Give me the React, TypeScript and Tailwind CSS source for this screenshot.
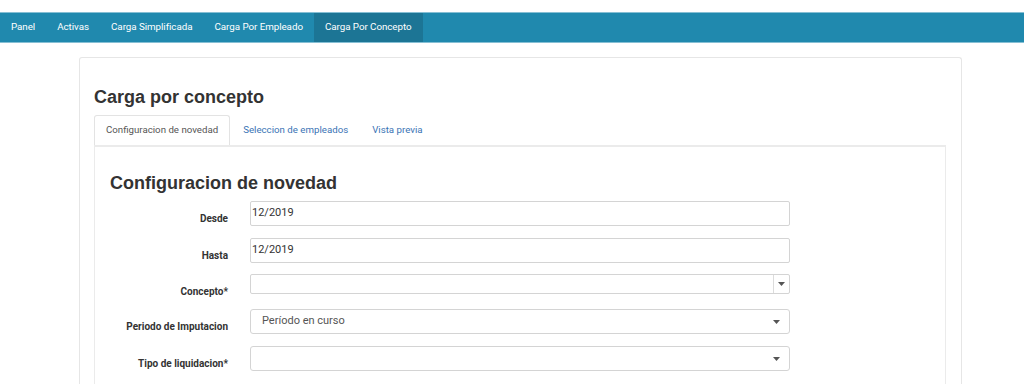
import React from "react";

const navItems = [
  { label: "Panel", active: false },
  { label: "Activas", active: false },
  { label: "Carga Simplificada", active: false },
  { label: "Carga Por Empleado", active: false },
  { label: "Carga Por Concepto", active: true },
];

function Caret() {
  return (
    <svg width="7" height="4" viewBox="0 0 7 4" aria-hidden="true">
      <path d="M0 0h7L3.5 4z" fill="#555" />
    </svg>
  );
}

function Row({
  label,
  height,
  children,
}: {
  label: string;
  height: string;
  children: React.ReactNode;
}) {
  return (
    <div className={`flex gap-[22px] ${height}`}>
      <div className="w-[118px] pt-[10px] text-right text-[10px] font-bold text-[#333]">
        {label}
      </div>
      {children}
    </div>
  );
}

export default function App() {
  return (
    <div className="min-h-[384px] bg-white pt-[12px] font-['Roboto',sans-serif]">
      {/* top nav */}
      <nav className="flex h-[31px] border-y border-[#86bfd4] bg-[#2089ae]">
        {navItems.map((item) => (
          <a
            key={item.label}
            className={`flex items-center px-[11px] text-[9.8px] tracking-[-0.05px] text-white ${
              item.active ? "bg-[#1c7595]" : ""
            }`}
          >
            {item.label}
          </a>
        ))}
      </nav>

      <div className="ml-[79px] mt-[14px] w-[883px] rounded-t-[3px] border border-b-0 border-[#e6e6e6] pl-[14px] pr-[15px] pt-[28px]">
        <h1 className="font-['Liberation_Sans',sans-serif] text-[18px] font-bold leading-[22px] text-[#333]">
          Carga por concepto
        </h1>

        {/* tabs */}
        <div className="mt-[7px] flex h-[30px] text-[9.7px]">
          <div className="flex items-center rounded-t-[3px] border border-b-0 border-[#e3e3e3] bg-white px-[11px] text-[#555]">
            Configuracion de novedad
          </div>
          <div className="flex items-center px-[13px] text-[#3a73b5]">Seleccion de empleados</div>
          <div className="flex items-center px-[11px] text-[#3a73b5]">Vista previa</div>
        </div>

        {/* panel */}
        <div className="h-[240px] border-x border-t-2 border-[#ebebeb] pl-[15px] pt-[25px]">
          <h2 className="font-['Liberation_Sans',sans-serif] text-[18px] font-bold leading-[22px] text-[#333]">
            Configuracion de novedad
          </h2>

          <div className="mt-[7px] flex flex-col">
            <Row label="Desde" height="h-[37px]">
              <div className="flex h-[25px] w-[540px] items-center rounded-[2px] border border-[#d4d4d4] px-[1px] text-[11px] text-[#333]">
                12/2019
              </div>
            </Row>
            <Row label="Hasta" height="h-[36px]">
              <div className="flex h-[25px] w-[540px] items-center rounded-[2px] border border-[#d4d4d4] px-[1px] text-[11px] text-[#333]">
                12/2019
              </div>
            </Row>
            <Row label="Concepto*" height="h-[35px]">
              <div className="flex h-[20px] w-[540px] rounded-[2px] border border-[#d4d4d4]">
                <div className="flex-1" />
                <div className="flex w-[16px] items-center justify-center border-l border-[#dcdcdc]">
                  <Caret />
                </div>
              </div>
            </Row>
            <Row label="Periodo de Imputacion" height="h-[37px]">
              <div className="flex h-[25px] w-[540px] items-center justify-between rounded-[3px] border border-[#d4d4d4] pl-[11px] pr-[9px] text-[11px] text-[#555]">
                <span>Período en curso</span>
                <Caret />
              </div>
            </Row>
            <Row label="Tipo de liquidacion*" height="h-[37px]">
              <div className="flex h-[25px] w-[540px] items-center justify-end rounded-[3px] border border-[#d4d4d4] pr-[9px]">
                <Caret />
              </div>
            </Row>
          </div>
        </div>
      </div>
    </div>
  );
}
